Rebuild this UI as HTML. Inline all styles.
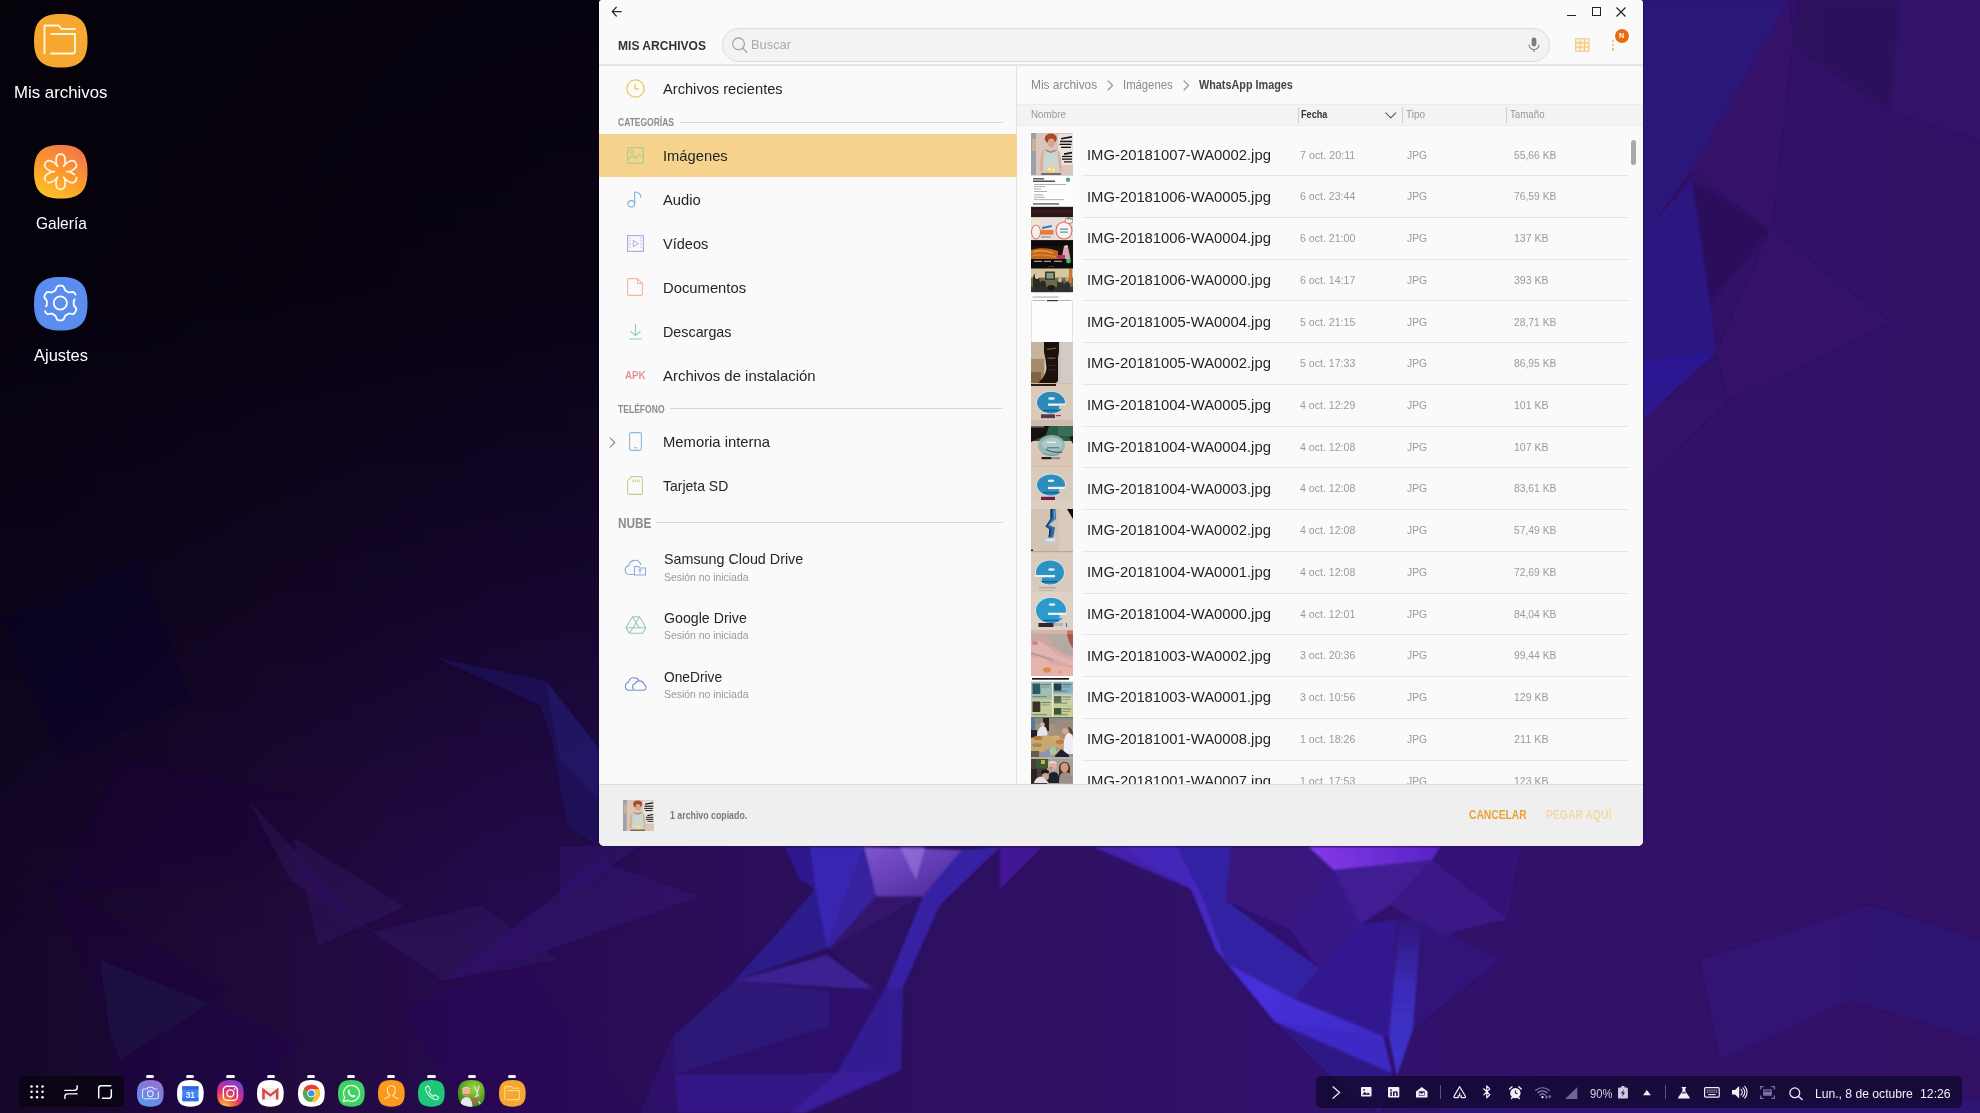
<!DOCTYPE html>
<html><head><meta charset="utf-8"><title>Samsung DeX - Mis archivos</title>
<style>
html,body{margin:0;padding:0}
body{width:1980px;height:1113px;overflow:hidden;position:relative;background:#1a0a3c;font-family:"Liberation Sans",sans-serif}
.t{position:absolute;white-space:nowrap;line-height:1;transform-origin:0 50%}
.abs{position:absolute}
svg{position:absolute;overflow:visible}
</style></head>
<body>
<svg class="abs" style="left:0;top:0" width="1980" height="1113" viewBox="0 0 1980 1113">
<defs>
<linearGradient id="wg1" x1="0" y1="0" x2="1" y2="0">
 <stop offset="0" stop-color="#150729"/><stop offset="0.15" stop-color="#210a3d"/>
 <stop offset="0.25" stop-color="#260b50"/><stop offset="0.35" stop-color="#2a0e58"/>
 <stop offset="0.5" stop-color="#2e1062"/><stop offset="0.66" stop-color="#30116c"/><stop offset="0.83" stop-color="#321168"/><stop offset="1" stop-color="#311066"/>
</linearGradient>
<linearGradient id="wg2" x1="0" y1="0" x2="0" y2="1">
 <stop offset="0" stop-color="#020105" stop-opacity="0.86"/><stop offset="0.27" stop-color="#020105" stop-opacity="0.8"/>
 <stop offset="0.54" stop-color="#03020a" stop-opacity="0.5"/>
 <stop offset="0.72" stop-color="#03020a" stop-opacity="0.2"/><stop offset="0.84" stop-color="#03020a" stop-opacity="0"/>
</linearGradient>
<linearGradient id="wg2m" x1="0" y1="0" x2="1" y2="0">
 <stop offset="0" stop-color="#fff"/><stop offset="0.94" stop-color="#fff"/><stop offset="1" stop-color="#fff" stop-opacity="0"/>
</linearGradient>
<mask id="wm"><rect width="640" height="1113" fill="url(#wg2m)"/></mask>
<linearGradient id="hl1" x1="0" y1="0" x2="1" y2="1"><stop offset="0" stop-color="#8a5ce0"/><stop offset="1" stop-color="#4a2a9c"/></linearGradient>
<linearGradient id="hl2" x1="0" y1="0" x2="1" y2="0"><stop offset="0" stop-color="#8b3cf2"/><stop offset="1" stop-color="#5a26c8"/></linearGradient>
<linearGradient id="rb" x1="0" y1="0" x2="1" y2="1"><stop offset="0" stop-color="#4426b8"/><stop offset="0.5" stop-color="#4a32e0"/><stop offset="1" stop-color="#3a2cc8"/></linearGradient>
<filter id="soft" x="-2%" y="-2%" width="104%" height="104%"><feGaussianBlur stdDeviation="1.100"/></filter>
<linearGradient id="vs" x1="0" y1="0" x2="0" y2="1"><stop offset="0" stop-color="#3c34d0" stop-opacity="0.150"/><stop offset="0.450" stop-color="#3e36d4" stop-opacity="0.850"/><stop offset="1" stop-color="#4038d8" stop-opacity="1"/></linearGradient>
</defs>
<rect width="1980" height="1113" fill="url(#wg1)"/>
<rect width="640" height="1113" fill="url(#wg2)" mask="url(#wm)"/>
<g filter="url(#soft)">
<polygon points="1643,0 1789,0 1692,169 1645,234 1643,234" fill="#2b157c" opacity="0.85"/>
<polygon points="1800,0 1900,0 1890,111 1792,43" fill="#2b0e58" opacity="0.7"/>
<polygon points="1692,169 1789,0 1792,43 1771,230" fill="#35146c" opacity="0.6"/>
<polygon points="1692,180 1771,230 1710,302" fill="#290e5a" opacity="0.85"/>
<polygon points="1643,234 1692,180 1710,302 1717,352 1643,395" fill="#2a1684" opacity="0.85"/>
<polygon points="1717,352 1771,230 1890,323 1728,400" fill="#37166c" opacity="0.6"/>
<polygon points="1643,360 1717,352 1663,400 1643,420" fill="#2c1a98" opacity="0.8"/>
<polygon points="1643,420 1663,400 1728,400 1643,480" fill="#381870" opacity="0.5"/>
<polygon points="1900,0 1980,0 1980,140 1890,111" fill="#33136c" opacity="0.5"/>
<polygon points="434,657 546,681 599,748 599,846 567,826 552,740 540,705" fill="#221868" opacity="0.55"/>
<polygon points="546,681 599,748 599,800 560,760" fill="#2a1e88" opacity="0.3"/>
<polygon points="247,798 371,932 290,880" fill="#34146a" opacity="0.4"/>
<polygon points="293,837 406,907 318,946" fill="#34146a" opacity="0.35"/>
<polygon points="371,932 480,905 560,960 442,981" fill="#331268" opacity="0.35"/>
<polygon points="442,981 601,861 700,897 520,960" fill="#36147c" opacity="0.4"/>
<polygon points="560,846 640,846 560,900" fill="#34137c" opacity="0.4"/>
<polygon points="120,760 330,800 250,880 60,890" fill="#1a0a3a" opacity="0.35"/>
<polygon points="50,880 230,990 120,1060" fill="#1d0d44" opacity="0.35"/>
<polygon points="100,960 300,1040 250,1113 120,1113" fill="#241052" opacity="0.3"/>
<polygon points="400,1010 520,960 640,1113 470,1113" fill="#2f1166" opacity="0.3"/>
<polygon points="0,620 140,560 190,700 60,760" fill="#10082c" opacity="0.25"/>
<polygon points="810,847 864,847 827,948 815,889" fill="#3a28b6" opacity="0.95"/>
<polygon points="785,847 810,847 815,889 800,880" fill="#2f1c9c" opacity="0.8"/>
<polygon points="864,847 962,850 923,896 876,896" fill="url(#hl1)" opacity="0.9"/>
<polygon points="900,847 925,847 916,880" fill="#a184e8" opacity="0.55"/>
<polygon points="876,896 923,896 830,948" fill="#33166e" opacity="0.9"/>
<polygon points="864,847 876,896 830,948 827,948" fill="#3b24a8" opacity="0.85"/>
<polygon points="815,889 827,948 734,981 773,938" fill="#2f1c90" opacity="0.9"/>
<polygon points="734,981 827,955 876,990 830,987" fill="#3d2199" opacity="0.9"/>
<polygon points="827,948 876,990 886,987 905,930 923,896 830,948" fill="#2c1162" opacity="0.6"/>
<polygon points="962,850 1000,847 940,905 903,987 886,987 923,896" fill="#3622ac" opacity="0.9"/>
<polygon points="886,987 903,987 901,1070 837,1073" fill="#3424a4" opacity="0.75"/>
<polygon points="734,981 830,990 830,1026 675,1075 673,1036" fill="#2e167c" opacity="0.85"/>
<polygon points="830,990 886,987 837,1073 675,1075 830,1026" fill="#2b1470" opacity="0.75"/>
<polygon points="675,1075 837,1073 790,1113 678,1113" fill="#351a8e" opacity="0.85"/>
<polygon points="837,1073 901,1070 805,1113 790,1113" fill="#3c22a6" opacity="0.85"/>
<polygon points="673,1036 675,1075 678,1113 640,1113" fill="#301478" opacity="0.6"/>
<polygon points="1000,847 1042,847 1000,889" fill="#46199c" opacity="0.9"/>
<polygon points="1093,847 1177,847 1204,901 1191,889" fill="#4524b4" opacity="0.9"/>
<polygon points="1120,847 1177,847 1191,889" fill="#4a2cc4" opacity="0.6"/>
<polygon points="1177,847 1204,901 1226,963 1294,999 1383,1036 1392,1073 1275,1022 1216,950 1191,889" fill="url(#rb)" opacity="0.95"/>
<polygon points="1177,847 1231,847 1226,901 1319,968 1294,999 1226,963 1204,901" fill="#3526aa" opacity="0.9"/>
<polygon points="1231,847 1309,847 1334,869 1290,930 1226,901" fill="#3a1682" opacity="0.85"/>
<polygon points="1226,901 1290,930 1319,968" fill="#2f1270" opacity="0.8"/>
<polygon points="1309,847 1440,847 1432,860 1334,870" fill="url(#hl2)" opacity="0.95"/>
<polygon points="1334,870 1432,860 1390,905 1360,925" fill="#43209a" opacity="0.85"/>
<polygon points="1290,930 1334,870 1360,925 1319,968" fill="#3c1a8e" opacity="0.8"/>
<polygon points="1432,860 1507,919 1440,935 1390,905" fill="#3f1c92" opacity="0.7"/>
<polygon points="1440,847 1520,847 1507,919 1432,860" fill="#371880" opacity="0.6"/>
<polygon points="1319,968 1360,925 1397,919 1389,1037 1383,1036 1294,999" fill="#341c9a" opacity="0.8"/>
<polygon points="1399,919 1421,919 1413,1029 1397,1076 1389,1037" fill="url(#vs)" opacity="0.9"/>
<polygon points="1421,919 1500,960 1413,1029" fill="#33188a" opacity="0.5"/>
<polygon points="1392,1073 1275,1022 1383,1036" fill="#3d2cc4" opacity="0.8"/>
<polygon points="1275,1022 1392,1073 1380,1113 1330,1075" fill="#32209c" opacity="0.55"/>
<polygon points="1700,960 1870,905 1850,1000 1720,1060" fill="#33178a" opacity="0.35"/>
<polygon points="1870,905 1980,940 1980,1040 1850,1000" fill="#2a1684" opacity="0.35"/>
<polygon points="1440,1100 1980,1100 1980,1113 1440,1113" fill="#2a1494" opacity="0.35"/>
</g>
</svg>
<svg style="left:34.3px;top:14.3px" width="53.5" height="53.5" viewBox="0 0 53.5 53.5"><path d="M26.75 0C46 0 53.5 7.5 53.5 26.75S46 53.5 26.75 53.5 0 46 0 26.75 7.5 0 26.75 0Z" fill="#f5a730"/><path d="M10.5 39.5V11.5h14l3 3.5h13.5M17.5 20h23.5v17a2.5 2.5 0 0 1-2.5 2.5H17" fill="none" stroke="#fff4d8" stroke-width="1.9" stroke-linecap="round" stroke-linejoin="round"/></svg><svg style="left:34.3px;top:145px" width="53.5" height="53.5" viewBox="0 0 53.5 53.5"><defs><linearGradient id="gal" x1="0.8" y1="0" x2="0.3" y2="1"><stop offset="0" stop-color="#f5734f"/><stop offset="0.55" stop-color="#fb9a2c"/><stop offset="1" stop-color="#fdc228"/></linearGradient></defs><path d="M26.75 0C46 0 53.5 7.5 53.5 26.75S46 53.5 26.75 53.5 0 46 0 26.75 7.5 0 26.75 0Z" fill="url(#gal)"/><path d="M23.50 21.33C21.57 18.64 20.48 8.92 26.60 9.10C32.72 8.92 31.63 18.64 29.70 21.33C31.06 18.31 38.93 12.51 41.84 17.90C45.05 23.11 36.09 27.03 32.80 26.70C36.09 26.37 45.05 30.29 41.84 35.50C38.93 40.89 31.06 35.09 29.70 32.07C31.63 34.76 32.72 44.48 26.60 44.30C20.48 44.48 21.57 34.76 23.50 32.07C22.14 35.09 14.27 40.89 11.36 35.50C8.15 30.29 17.11 26.37 20.40 26.70C17.11 27.03 8.15 23.11 11.36 17.90C14.27 12.51 22.14 18.31 23.50 21.33" fill="none" stroke="#fff6dc" stroke-width="1.700" stroke-linecap="round" stroke-linejoin="round" stroke-dasharray="68 3.500 60 3 200"/></svg><svg style="left:34.3px;top:277px" width="53.5" height="53.5" viewBox="0 0 53.5 53.5"><path d="M26.75 0C46 0 53.5 7.5 53.5 26.75S46 53.5 26.75 53.5 0 46 0 26.75 7.5 0 26.75 0Z" fill="#5b8def"/><g fill="none" stroke="#fff" stroke-width="1.800" stroke-linecap="round" stroke-linejoin="round"><circle cx="26.300" cy="26" r="6.600"/><path d="M39.7 26.0L39.7 26.7L39.7 27.4L39.8 28.1L40.2 29.0L41.2 30.0L42.0 31.1L42.3 32.1L42.1 33.1L41.8 33.9L41.4 34.7L40.9 35.5L40.3 36.2L39.6 36.8L38.6 37.1L37.2 36.9L35.8 36.6L34.9 36.6L34.2 36.9L33.6 37.2L33.0 37.6L32.4 37.9L31.8 38.3L31.2 38.8L30.7 39.5L30.3 40.9L29.7 42.2L29.0 42.9L28.1 43.2L27.2 43.4L26.3 43.4L25.4 43.4L24.5 43.2L23.6 42.9L22.9 42.2L22.3 40.9L21.9 39.5L21.4 38.8L20.8 38.3L20.2 37.9L19.6 37.6L19.0 37.2L18.4 36.9L17.7 36.6L16.8 36.6L15.4 36.9L14.0 37.1L13.0 36.8L12.3 36.2L11.7 35.5L11.2 34.7L10.8 33.9L10.5 33.1L10.3 32.1L10.6 31.1L11.4 30.0L12.4 29.0L12.8 28.1L12.9 27.4L12.9 26.7L12.9 26.0L12.9 25.3L12.9 24.6L12.8 23.9L12.4 23.0L11.4 22.0L10.6 20.9L10.3 19.9L10.5 18.9L10.8 18.1L11.2 17.3L11.7 16.5L12.3 15.8L13.0 15.2L14.0 14.9L15.4 15.1L16.8 15.4L17.7 15.4L18.4 15.1L19.0 14.8L19.6 14.4L20.2 14.1L20.8 13.7L21.4 13.2L21.9 12.5L22.3 11.1L22.9 9.8L23.6 9.1L24.5 8.8L25.4 8.6L26.3 8.6L27.2 8.6L28.1 8.8L29.0 9.1L29.7 9.8L30.3 11.1L30.7 12.5L31.2 13.2L31.8 13.7L32.4 14.1L33.0 14.4L33.6 14.8L34.2 15.1L34.9 15.4L35.8 15.4L37.2 15.1L38.6 14.9L39.6 15.2L40.3 15.8L40.9 16.5L41.4 17.3L41.8 18.1L42.1 18.9L42.3 19.9L42.0 20.9L41.2 22.0L40.2 23.0L39.8 23.9L39.7 24.6L39.7 25.3L39.7 26.0" stroke-dasharray="49 5.500 52.500 5.500 3.9 0"/></g></svg><span class="t" style="left:14.3px;top:84.0px;font-size:17px;font-weight:400;color:#fff;transform:scaleX(0.9887);">Mis archivos</span><span class="t" style="left:35.6px;top:215.0px;font-size:17px;font-weight:400;color:#fff;transform:scaleX(0.9112);">Galería</span><span class="t" style="left:34.2px;top:347.0px;font-size:17px;font-weight:400;color:#fff;transform:scaleX(0.9686);">Ajustes</span><div class="abs" style="left:599px;top:0;width:1044px;height:846px;background:#fafafa;border-radius:2.500px 2.500px 5px 5px;box-shadow:0 0 2px rgba(0,0,0,.45)"></div><div class="abs" style="left:599px;top:64px;width:1044px;height:2px;background:#e4e4e4"></div><div class="abs" style="left:1016px;top:66px;width:1px;height:718px;background:#e2e2e2"></div><div class="abs" style="left:599px;top:784px;width:1044px;height:62px;background:#efefef;border-top:1px solid #dcdcdc;box-sizing:border-box;border-radius:0 0 5px 5px"></div><svg style="left:611px;top:6px" width="12" height="12" viewBox="0 0 12 12"><path d="M10.200 5.600H1.400M5.300 1.200L1.200 5.600l4.100 4.400" fill="none" stroke="#2b2b2b" stroke-width="1.250" stroke-linecap="round" stroke-linejoin="round"/></svg><div class="abs" style="left:1567px;top:14.5px;width:9px;height:1.4px;background:#222"></div><div class="abs" style="left:1592px;top:7px;width:9px;height:9px;box-sizing:border-box;border:1.2px solid #222"></div><svg style="left:1616px;top:6.500px" width="10" height="10" viewBox="0 0 10 10"><path d="M0.500 0.500l9 9M9.500 0.500l-9 9" stroke="#222" stroke-width="1.2"/></svg><span class="t" style="left:618.4px;top:39.0px;font-size:13.5px;font-weight:700;color:#333;transform:scaleX(0.8933);">MIS ARCHIVOS</span><div class="abs" style="left:721.5px;top:28px;width:828.500px;height:34px;box-sizing:border-box;border:1px solid #dcdcdc;border-radius:17px;background:#f3f3f3"></div><svg style="left:731px;top:36px" width="18" height="18" viewBox="0 0 18 18"><circle cx="7.500" cy="7.800" r="5.900" fill="none" stroke="#9a9a9a" stroke-width="1.1"/><path d="M11.800 12.200l4 4.200" stroke="#9a9a9a" stroke-width="1.2" stroke-linecap="round"/></svg><span class="t" style="left:751.3px;top:38.0px;font-size:13px;font-weight:400;color:#aaaaaa;transform:scaleX(0.9884);">Buscar</span><svg style="left:1527px;top:36px" width="14" height="18" viewBox="0 0 14 18"><rect x="4.600" y="1.500" width="4.800" height="9" rx="2.400" fill="#7d7d7d"/><path d="M2 8.500a5 5 0 0 0 10 0M7 13.500v2.500" fill="none" stroke="#7d7d7d" stroke-width="1.1"/></svg><svg style="left:1575px;top:38px" width="15" height="14" viewBox="0 0 15 14"><path d="M0.700 0.700h13.300v12.600H0.700zM5.100 0.700v12.600M9.600 0.700v12.600M0.700 4.900h13.300M0.700 9.100h13.300" fill="#fbf1dc" stroke="#eec987" stroke-width="1.1"/></svg><div class="abs" style="left:1611.5px;top:39.500px;width:2.600px;height:2.600px;border-radius:2px;background:#eab765"></div><div class="abs" style="left:1611.5px;top:43.800px;width:2.600px;height:2.600px;border-radius:2px;background:#eab765"></div><div class="abs" style="left:1611.5px;top:48.100px;width:2.600px;height:2.600px;border-radius:2px;background:#eab765"></div><div class="abs" style="left:1615px;top:28.800px;width:14px;height:14px;border-radius:7px;background:#ea6a12"></div><span class="t" style="left:1619.4px;top:32.0px;font-size:7.5px;font-weight:700;color:#fff;transform:scaleX(0.9591);">N</span><svg style="left:625.5px;top:79px" width="19" height="19" viewBox="0 0 19 19"><circle cx="9.500" cy="9.500" r="8.600" fill="none" stroke="#e9c84f" stroke-width="1.2"/><path d="M9 4.800v5h4" fill="none" stroke="#e9c84f" stroke-width="1.2"/></svg><span class="t" style="left:663.4px;top:81.0px;font-size:15px;font-weight:400;color:#252525;transform:scaleX(0.9766);">Archivos recientes</span><span class="t" style="left:618.4px;top:118.0px;font-size:10px;font-weight:700;color:#8c8c8c;transform:scaleX(0.8493);">CATEGORÍAS</span><div class="abs" style="left:679.5px;top:121.500px;width:323.500px;height:1.200px;background:#d9d9d9"></div><div class="abs" style="left:599px;top:133.500px;width:418px;height:43px;background:#f5d38c"></div><span class="t" style="left:663.2px;top:148.0px;font-size:15px;font-weight:400;color:#252525;transform:scaleX(0.9822);">Imágenes</span><span class="t" style="left:663.2px;top:192.0px;font-size:15px;font-weight:400;color:#252525;transform:scaleX(0.9850);">Audio</span><span class="t" style="left:663.2px;top:236.0px;font-size:15px;font-weight:400;color:#252525;transform:scaleX(0.9700);">Vídeos</span><span class="t" style="left:663.2px;top:280.0px;font-size:15px;font-weight:400;color:#252525;transform:scaleX(0.9867);">Documentos</span><span class="t" style="left:663.2px;top:324.0px;font-size:15px;font-weight:400;color:#252525;transform:scaleX(0.9553);">Descargas</span><span class="t" style="left:663.2px;top:368.0px;font-size:15px;font-weight:400;color:#252525;transform:scaleX(0.9946);">Archivos de instalación</span><span class="t" style="left:663.2px;top:434.0px;font-size:15px;font-weight:400;color:#252525;transform:scaleX(0.9872);">Memoria interna</span><span class="t" style="left:663.2px;top:478.0px;font-size:15px;font-weight:400;color:#252525;transform:scaleX(0.9324);">Tarjeta SD</span><svg style="left:627px;top:146.500px" width="17" height="17" viewBox="0 0 17 17"><rect x="0.600" y="0.600" width="15.800" height="15.800" rx="1" fill="none" stroke="#a9cf8d" stroke-width="1.100"/><circle cx="4.600" cy="4.800" r="1.500" fill="none" stroke="#a9cf8d" stroke-width="1"/><path d="M0.800 12.500l4.400-4 3.600 3 3.400-4.300 4.200 3.500" fill="none" stroke="#a9cf8d" stroke-width="1.100"/></svg><svg style="left:627px;top:190.500px" width="16" height="17" viewBox="0 0 16 17"><ellipse cx="4.300" cy="12.800" rx="3.400" ry="3.200" fill="none" stroke="#7fb1d6" stroke-width="1.100"/><path d="M7.700 12.800V1c3.500 0 6 2 6.300 5.500" fill="none" stroke="#7fb1d6" stroke-width="1.100" stroke-linecap="round"/></svg><svg style="left:626.5px;top:234.500px" width="17" height="17" viewBox="0 0 17 17"><rect x="0.600" y="0.600" width="15.800" height="15.800" fill="none" stroke="#b3a3e3" stroke-width="1.100"/><path d="M3 2.500v12M14 2.500v12" stroke="#b3a3e3" stroke-width="1" stroke-dasharray="1.300 1.700"/><path d="M6.300 5.300v6.400l5.200-3.200z" fill="none" stroke="#b3a3e3" stroke-width="1" stroke-linejoin="round"/></svg><svg style="left:627px;top:278px" width="16" height="18" viewBox="0 0 16 18"><path d="M0.600 2.100a1.500 1.500 0 0 1 1.500-1.500h8.400l4.900 4.900v10.400a1.500 1.500 0 0 1-1.500 1.500H2.100a1.500 1.500 0 0 1-1.500-1.500zM10.500 0.600v4.900h4.900" fill="none" stroke="#f1b999" stroke-width="1.100" stroke-linejoin="round"/></svg><svg style="left:628.5px;top:323.500px" width="13" height="16" viewBox="0 0 13 16"><path d="M6.500 0.500v11M1.800 7.300l4.700 4.400 4.700-4.400M0.500 15h12" fill="none" stroke="#93c9c6" stroke-width="1.100" stroke-linecap="round" stroke-linejoin="round"/></svg><span class="t" style="left:624.8px;top:370.0px;font-size:11px;font-weight:700;color:#ea9292;transform:scaleX(0.8909);">APK</span><span class="t" style="left:618.1px;top:405.0px;font-size:10px;font-weight:700;color:#8c8c8c;transform:scaleX(0.8558);">TELÉFONO</span><div class="abs" style="left:669.5px;top:408.300px;width:333.500px;height:1.200px;background:#d9d9d9"></div><svg style="left:608.5px;top:436.500px" width="7" height="11" viewBox="0 0 7 11"><path d="M1 0.800l4.800 4.700L1 10.200" fill="none" stroke="#8a8a8a" stroke-width="1.100" stroke-linecap="round" stroke-linejoin="round"/></svg><svg style="left:628.5px;top:432px" width="13" height="19" viewBox="0 0 13 19"><rect x="0.600" y="0.600" width="11.800" height="17.800" rx="1.600" fill="none" stroke="#8cb9e2" stroke-width="1.100"/><path d="M5 15.800h3" stroke="#8cb9e2" stroke-width="1"/></svg><svg style="left:626.5px;top:476px" width="16" height="19" viewBox="0 0 16 19"><path d="M4.500 0.600h9.400a1.500 1.500 0 0 1 1.500 1.500v14.800a1.500 1.500 0 0 1-1.500 1.500H2.100a1.500 1.500 0 0 1-1.500-1.500V5z" fill="none" stroke="#bcd489" stroke-width="1.100" stroke-linejoin="round"/><path d="M6 3.500v2.800M8.200 3.500v2.800M10.400 3.500v2.800M12.600 3.500v2.800" stroke="#bcd489" stroke-width="1"/></svg><span class="t" style="left:618.1px;top:516.0px;font-size:14.5px;font-weight:700;color:#8c8c8c;transform:scaleX(0.8128);">NUBE</span><div class="abs" style="left:655.5px;top:521.600px;width:347.500px;height:1.200px;background:#d9d9d9"></div><span class="t" style="left:663.5px;top:551.0px;font-size:15px;font-weight:400;color:#252525;transform:scaleX(0.9540);">Samsung Cloud Drive</span><span class="t" style="left:663.5px;top:572.0px;font-size:10.5px;font-weight:400;color:#999;transform:scaleX(0.9914);">Sesión no iniciada</span><span class="t" style="left:663.5px;top:610.0px;font-size:15px;font-weight:400;color:#252525;transform:scaleX(0.9458);">Google Drive</span><span class="t" style="left:663.5px;top:630.0px;font-size:10.5px;font-weight:400;color:#999;transform:scaleX(0.9914);">Sesión no iniciada</span><span class="t" style="left:663.5px;top:669.0px;font-size:15px;font-weight:400;color:#252525;transform:scaleX(0.9170);">OneDrive</span><span class="t" style="left:663.5px;top:689.0px;font-size:10.5px;font-weight:400;color:#999;transform:scaleX(0.9914);">Sesión no iniciada</span><svg style="left:623.5px;top:556.500px" width="23" height="19" viewBox="0 0 23 19"><path d="M9.500 17.500H5.200A4.500 4.500 0 0 1 4.800 8.600 6.200 6.200 0 0 1 16.800 7.500" fill="none" stroke="#8ea9d8" stroke-width="1.100" stroke-linecap="round"/><path d="M10.500 9.500h4l1.200 1.500h5.800v7H10.500z" fill="none" stroke="#8ea9d8" stroke-width="1.100" stroke-linejoin="round"/><path d="M16 16.500v-4M14.300 13.800l1.700-1.600 1.700 1.600" fill="none" stroke="#8ea9d8" stroke-width="1"/></svg><svg style="left:624.5px;top:615.500px" width="22" height="18" viewBox="0 0 22 18"><path d="M7.500 0.800h7l6.500 11-3.400 5.400H4.200L0.900 11.800zM7.500 0.800l6.800 11H21M14.500 0.800L8 11.800l-3.800 5.400M0.900 11.800h13.400" fill="none" stroke="#93c9b3" stroke-width="1.050" stroke-linejoin="round"/></svg><svg style="left:623.5px;top:675px" width="24" height="16" viewBox="0 0 24 16"><path d="M9 15.200H5A4 4 0 0 1 4.600 7.300 5.600 5.600 0 0 1 15 5.600" fill="none" stroke="#7393cb" stroke-width="1.100" stroke-linecap="round"/><path d="M11.500 15.200a3.400 3.400 0 0 1-0.200-6.700 4.700 4.700 0 0 1 8.800 1 3 3 0 0 1-0.300 5.700z" fill="none" stroke="#7393cb" stroke-width="1.100" stroke-linejoin="round"/></svg><span class="t" style="left:1030.9px;top:79.0px;font-size:12px;font-weight:400;color:#8a8a8a;transform:scaleX(0.9927);">Mis archivos</span><span class="t" style="left:1123.2px;top:79.0px;font-size:12px;font-weight:400;color:#8a8a8a;transform:scaleX(0.9411);">Imágenes</span><span class="t" style="left:1198.9px;top:79.0px;font-size:12px;font-weight:700;color:#454545;transform:scaleX(0.9027);">WhatsApp Images</span><svg style="left:1107px;top:80px" width="7" height="11" viewBox="0 0 7 11"><path d="M1 0.800l4.600 4.600L1 10" fill="none" stroke="#8a8a8a" stroke-width="1.100" stroke-linecap="round" stroke-linejoin="round"/></svg><svg style="left:1183px;top:80px" width="7" height="11" viewBox="0 0 7 11"><path d="M1 0.800l4.600 4.600L1 10" fill="none" stroke="#8a8a8a" stroke-width="1.100" stroke-linecap="round" stroke-linejoin="round"/></svg><div class="abs" style="left:1017px;top:103.500px;width:626px;height:22.500px;background:#f3f3f3;border-top:1px solid #ececec;border-bottom:1px solid #ececec;box-sizing:border-box"></div><div class="abs" style="left:1297.5px;top:106.500px;width:1px;height:16px;background:#cfcfcf"></div><div class="abs" style="left:1401.5px;top:106.500px;width:1px;height:16px;background:#cfcfcf"></div><div class="abs" style="left:1506.2px;top:106.500px;width:1px;height:16px;background:#cfcfcf"></div><span class="t" style="left:1030.9px;top:109.0px;font-size:10.5px;font-weight:400;color:#999;transform:scaleX(0.9368);">Nombre</span><span class="t" style="left:1301.2px;top:109.0px;font-size:10.5px;font-weight:700;color:#333;transform:scaleX(0.8696);">Fecha</span><span class="t" style="left:1405.7px;top:109.0px;font-size:10.5px;font-weight:400;color:#999;transform:scaleX(0.9478);">Tipo</span><span class="t" style="left:1510.4px;top:109.0px;font-size:10.5px;font-weight:400;color:#999;transform:scaleX(0.9261);">Tamaño</span><svg style="left:1385px;top:111.500px" width="12" height="7" viewBox="0 0 12 7"><path d="M0.800 0.800l5 5 5-5" fill="none" stroke="#555" stroke-width="1.100" stroke-linecap="round" stroke-linejoin="round"/></svg><div class="abs" style="left:1017px;top:126px;width:626px;height:658px;overflow:hidden"><div class="abs" style="left:14px;top:7.40px;width:42px;height:42.03px;overflow:hidden;background:#d8c4b6"><svg style="left:0;top:0" width="42" height="42" viewBox="0 0 42 42" preserveAspectRatio="none"><rect width="42" height="42" fill="#d9c5b9"/><rect width="5" height="42" fill="#9aa0ac"/><rect x="1" y="6" width="4" height="12" fill="#c9b08e"/><rect x="27" y="1" width="15" height="31" fill="#e9e2de"/><ellipse cx="19.800" cy="5.600" rx="6" ry="5" fill="#a8492a"/><ellipse cx="20.300" cy="9.800" rx="3.500" ry="4.400" fill="#d9a48c"/><path d="M8.500 38c0-9 1.500-19 4.500-21h13.500c3.500 2 4 12 4 21z" fill="#dcae98"/><path d="M13 17.500c3 2.500 10 2.500 13.500 0l2 20.500H12z" fill="#cad6d2"/><path d="M15 16.500c2.500 3.500 7.500 3.500 10 0" fill="none" stroke="#6a6a72" stroke-width="0.900"/><ellipse cx="20.500" cy="36.500" rx="5" ry="3.600" fill="#e6d68c"/><circle cx="18.500" cy="36" r="1.300" fill="#f4ecd0"/><circle cx="22.500" cy="37" r="1.300" fill="#f4ecd0"/><rect x="10" y="40" width="20" height="2" fill="#7a6a62"/><g fill="#141414"><rect x="30" y="4" width="11" height="1.700" transform="rotate(-10 35 5)"/><rect x="29" y="7.700" width="12" height="1.500"/><rect x="28.500" y="10.700" width="12" height="1.300"/><rect x="30" y="13.700" width="10" height="1.300"/><rect x="33" y="19.500" width="8" height="1.700" transform="rotate(-10 37 20)"/><rect x="31" y="22.800" width="10" height="1.300"/><rect x="31" y="25.500" width="10" height="1.300"/><rect x="33" y="28.300" width="8" height="1.200"/></g></svg></div><span class="t" style="left:69.6px;top:21.0px;font-size:15px;font-weight:400;color:#252525;transform:scaleX(0.9875);">IMG-20181007-WA0002.jpg</span><span class="t" style="left:283.3px;top:24.0px;font-size:11px;font-weight:400;color:#9a9a9a;transform:scaleX(0.9758);">7 oct. 20:11</span><span class="t" style="left:390.2px;top:24.0px;font-size:11px;font-weight:400;color:#9a9a9a;transform:scaleX(0.9343);">JPG</span><span class="t" style="left:496.7px;top:24.0px;font-size:11px;font-weight:400;color:#9a9a9a;transform:scaleX(0.9367);">55,66 KB</span><div class="abs" style="left:65px;top:49.30px;width:547px;height:1px;background:#e6e6e6"></div><div class="abs" style="left:14px;top:49.13px;width:42px;height:42.03px;overflow:hidden;background:#d8c4b6"><svg style="left:0;top:0" width="42" height="42" viewBox="0 0 42 42" preserveAspectRatio="none"><rect width="42" height="42" fill="#fdfdfd"/><rect width="42" height="0.800" fill="#cfcfcf"/><circle cx="37" cy="4.700" r="2.200" fill="#3bb27a"/><rect x="2" y="3.300" width="11" height="1.100" fill="#222"/><rect x="2" y="5.600" width="22" height="1.200" fill="#222"/><g fill="#9a9a9a"><rect x="3" y="9" width="32" height="0.800"/><rect x="3" y="11.300" width="11" height="0.800"/><rect x="3" y="13.600" width="7" height="0.800"/><rect x="3" y="16" width="13" height="0.800"/><rect x="3" y="19.500" width="9" height="0.800"/><rect x="3" y="21.800" width="11" height="0.800"/><rect x="3" y="24.300" width="30" height="0.800"/></g><rect x="2" y="28.300" width="26" height="1.300" fill="#555"/><rect y="31.800" width="42" height="10.200" fill="#2a161a"/><rect y="35" width="42" height="3" fill="#3a1a1a"/></svg></div><span class="t" style="left:69.6px;top:63.0px;font-size:15px;font-weight:400;color:#252525;transform:scaleX(0.9875);">IMG-20181006-WA0005.jpg</span><span class="t" style="left:283.3px;top:65.0px;font-size:11px;font-weight:400;color:#9a9a9a;transform:scaleX(0.9617);">6 oct. 23:44</span><span class="t" style="left:390.2px;top:65.0px;font-size:11px;font-weight:400;color:#9a9a9a;transform:scaleX(0.9343);">JPG</span><span class="t" style="left:496.7px;top:65.0px;font-size:11px;font-weight:400;color:#9a9a9a;transform:scaleX(0.9367);">76,59 KB</span><div class="abs" style="left:65px;top:91.03px;width:547px;height:1px;background:#e6e6e6"></div><div class="abs" style="left:14px;top:90.86px;width:42px;height:42.03px;overflow:hidden;background:#d8c4b6"><svg style="left:0;top:0" width="42" height="42" viewBox="0 0 42 42" preserveAspectRatio="none"><rect width="42" height="42" fill="#e9dfda"/><rect width="42" height="1" fill="#d0c4c0"/><ellipse cx="5" cy="15" rx="4.500" ry="7" fill="#f4efec" stroke="#d8685e" stroke-width="1"/><ellipse cx="33" cy="13.500" rx="8" ry="8.500" fill="#f6f2f0" stroke="#d8685e" stroke-width="1.100"/><ellipse cx="38" cy="3.500" rx="4" ry="3" fill="#f4efec" stroke="#d8685e" stroke-width="0.900"/><rect x="36" y="1" width="6" height="1.500" fill="#3fb8a0"/><rect x="9.500" y="13" width="13" height="4.600" fill="#ea7a3a"/><rect x="11" y="9" width="10" height="2" fill="#3a78b8" transform="rotate(-12 16 10)"/><rect x="29" y="11.500" width="8" height="1.200" fill="#4a9aa8"/><rect x="29" y="14.500" width="8" height="1.200" fill="#4a9aa8"/><rect x="10" y="19.500" width="10" height="1" fill="#7a7a8a"/><ellipse cx="5" cy="5" rx="4" ry="3" fill="#f0e6c8"/><rect y="23.300" width="42" height="18.700" fill="#17100e"/><rect y="23.300" width="42" height="6" fill="#0e0a0a"/><path d="M0 33c8-3 20-2 27 1v8H0z" fill="#c4681e"/><path d="M2 35c6-2 14-1 20 1" stroke="#e89a3a" stroke-width="1.500" fill="none"/><path d="M1 39c7-2 16-1 24 1" stroke="#e08830" stroke-width="1.300" fill="none"/><path d="M33 29c2-1 4 0 4.500 3l2 10h-9z" fill="#d9a4b4"/><circle cx="35.500" cy="29.500" r="1.600" fill="#e8c0c0"/><rect x="26" y="38" width="8" height="4" fill="#b03a50"/></svg></div><span class="t" style="left:69.6px;top:104.0px;font-size:15px;font-weight:400;color:#252525;transform:scaleX(0.9875);">IMG-20181006-WA0004.jpg</span><span class="t" style="left:283.3px;top:107.0px;font-size:11px;font-weight:400;color:#9a9a9a;transform:scaleX(0.9617);">6 oct. 21:00</span><span class="t" style="left:390.2px;top:107.0px;font-size:11px;font-weight:400;color:#9a9a9a;transform:scaleX(0.9343);">JPG</span><span class="t" style="left:496.7px;top:107.0px;font-size:11px;font-weight:400;color:#9a9a9a;transform:scaleX(0.9586);">137 KB</span><div class="abs" style="left:65px;top:132.76px;width:547px;height:1px;background:#e6e6e6"></div><div class="abs" style="left:14px;top:132.59px;width:42px;height:42.03px;overflow:hidden;background:#d8c4b6"><svg style="left:0;top:0" width="42" height="42" viewBox="0 0 42 42" preserveAspectRatio="none"><rect width="42" height="42" fill="#0d0b0b"/><g fill="#d8d8d8"><rect x="3" y="1.800" width="8" height="0.900"/><rect x="13" y="1.800" width="7" height="0.900"/><rect x="23" y="1.800" width="8" height="0.900"/></g><circle cx="37.500" cy="2" r="2.400" fill="#2fc465"/><rect x="17" y="7" width="6" height="0.700" fill="#444"/><rect y="9.600" width="42" height="23.600" fill="#6c6a4a"/><rect y="9.600" width="42" height="9" fill="#d6c79e"/><rect x="38" y="10" width="3" height="14" fill="#c87830"/><rect x="14" y="12.500" width="10" height="8.500" fill="#3a3a30"/><rect x="15.500" y="14" width="7" height="5.500" fill="#8a9a88"/><path d="M2 33V18c1-4 5-5 6 0l1 6c2-4 5-3 6 1v8z" fill="#2a2a22"/><path d="M26 33v-9c1-5 5-6 6-1l1 3c1-4 5-4 6 0v7z" fill="#303028"/><ellipse cx="6" cy="17" rx="2.200" ry="3" fill="#d8c8b8"/><ellipse cx="29" cy="21" rx="2" ry="2.500" fill="#c8b8a0"/><ellipse cx="36" cy="20" rx="1.800" ry="2.300" fill="#b8a890"/><rect y="28" width="42" height="5.200" fill="#2c3028" opacity="0.850"/><ellipse cx="20" cy="29" rx="4" ry="3" fill="#1a1c18"/><rect y="33.200" width="42" height="8.800" fill="#fcfcfc"/><rect x="1.500" y="37.600" width="26" height="0.900" fill="#9a9a9a"/></svg></div><span class="t" style="left:69.6px;top:146.0px;font-size:15px;font-weight:400;color:#252525;transform:scaleX(0.9875);">IMG-20181006-WA0000.jpg</span><span class="t" style="left:283.3px;top:149.0px;font-size:11px;font-weight:400;color:#9a9a9a;transform:scaleX(0.9617);">6 oct. 14:17</span><span class="t" style="left:390.2px;top:149.0px;font-size:11px;font-weight:400;color:#9a9a9a;transform:scaleX(0.9343);">JPG</span><span class="t" style="left:496.7px;top:149.0px;font-size:11px;font-weight:400;color:#9a9a9a;transform:scaleX(0.9586);">393 KB</span><div class="abs" style="left:65px;top:174.49px;width:547px;height:1px;background:#e6e6e6"></div><div class="abs" style="left:14px;top:174.32px;width:42px;height:42.03px;overflow:hidden;background:#d8c4b6"><svg style="left:0;top:0" width="42" height="42" viewBox="0 0 42 42" preserveAspectRatio="none"><rect width="42" height="42" fill="#fefefe"/><rect x="0" y="0" width="0.700" height="42" fill="#d9d9d9"/><rect x="41.300" y="0" width="0.700" height="42" fill="#d9d9d9"/><rect y="0.300" width="42" height="0.600" fill="#cfcfcf"/><rect x="2" y="0.200" width="12" height="0.800" fill="#aaa"/><rect x="16" y="0" width="11" height="1.200" fill="#333"/><rect x="28" y="0.200" width="12" height="0.800" fill="#aaa"/></svg></div><span class="t" style="left:69.6px;top:188.0px;font-size:15px;font-weight:400;color:#252525;transform:scaleX(0.9875);">IMG-20181005-WA0004.jpg</span><span class="t" style="left:283.3px;top:191.0px;font-size:11px;font-weight:400;color:#9a9a9a;transform:scaleX(0.9617);">5 oct. 21:15</span><span class="t" style="left:390.2px;top:191.0px;font-size:11px;font-weight:400;color:#9a9a9a;transform:scaleX(0.9343);">JPG</span><span class="t" style="left:496.7px;top:191.0px;font-size:11px;font-weight:400;color:#9a9a9a;transform:scaleX(0.9367);">28,71 KB</span><div class="abs" style="left:65px;top:216.22px;width:547px;height:1px;background:#e6e6e6"></div><div class="abs" style="left:14px;top:216.05px;width:42px;height:42.03px;overflow:hidden;background:#d8c4b6"><svg style="left:0;top:0" width="42" height="42" viewBox="0 0 42 42" preserveAspectRatio="none"><rect width="42" height="42" fill="#cfc4b8"/><rect width="14" height="42" fill="#c6b49c"/><rect x="30" width="12" height="42" fill="#d2cac4"/><path d="M0 17h13v25H0z" fill="#9a7c56" opacity="0.750"/><path d="M0 30h10v12H0z" fill="#6e5438" opacity="0.700"/><path d="M13 0h15v10l-1 6v23l-3 3H6.500c4-4 8.500-9 9-16l-1-9-1.500-7z" fill="#1c120a"/><g fill="#6a5a4a"><rect x="16" y="6.300" width="9" height="1.200" transform="rotate(-8 20 7)"/><rect x="16.500" y="15.500" width="8" height="1.300"/><rect x="17" y="23" width="7" height="0.800" fill="#4a3228"/><rect x="17.500" y="27.500" width="7" height="0.900" fill="#3a3030"/></g><rect y="41" width="42" height="1" fill="#d8b8a8"/></svg></div><span class="t" style="left:69.6px;top:229.0px;font-size:15px;font-weight:400;color:#252525;transform:scaleX(0.9875);">IMG-20181005-WA0002.jpg</span><span class="t" style="left:283.3px;top:232.0px;font-size:11px;font-weight:400;color:#9a9a9a;transform:scaleX(0.9617);">5 oct. 17:33</span><span class="t" style="left:390.2px;top:232.0px;font-size:11px;font-weight:400;color:#9a9a9a;transform:scaleX(0.9343);">JPG</span><span class="t" style="left:496.7px;top:232.0px;font-size:11px;font-weight:400;color:#9a9a9a;transform:scaleX(0.9367);">86,95 KB</span><div class="abs" style="left:65px;top:257.95px;width:547px;height:1px;background:#e6e6e6"></div><div class="abs" style="left:14px;top:257.78px;width:42px;height:42.03px;overflow:hidden;background:#d8c4b6"><svg style="left:0;top:0" width="42" height="42" viewBox="0 0 42 42" preserveAspectRatio="none"><rect width="42" height="42" fill="#d9cabb"/><rect width="25" height="2" fill="#2a1c10"/><rect y="36" width="42" height="6" fill="#cdbdae"/><ellipse cx="20" cy="18.6" rx="14.8" ry="11.600000000000001" fill="#e4ecf0" opacity="0.8"/><ellipse cx="20" cy="18.6" rx="14" ry="10.8" fill="#2b8ab8"/><rect x="17" y="19.5" width="17" height="2.300" fill="#eef2f4"/><ellipse cx="20.5" cy="14.5" rx="3.300" ry="1.300" fill="#e8f0f4"/><path d="M35 21.8h-7.0v3.200h5.6000000000000005z" fill="#d8c8b8"/><rect x="12" y="25.900000000000002" width="15" height="1.300" fill="#1a4a78" opacity="0.800"/><rect x="10" y="30.300" width="14" height="3.800" fill="#5c3454"/><rect x="24" y="30" width="8" height="3.600" fill="#d8c8cc"/><rect x="25" y="31" width="5" height="1.200" fill="#a04058"/></svg></div><span class="t" style="left:69.6px;top:271.0px;font-size:15px;font-weight:400;color:#252525;transform:scaleX(0.9875);">IMG-20181004-WA0005.jpg</span><span class="t" style="left:283.3px;top:274.0px;font-size:11px;font-weight:400;color:#9a9a9a;transform:scaleX(0.9617);">4 oct. 12:29</span><span class="t" style="left:390.2px;top:274.0px;font-size:11px;font-weight:400;color:#9a9a9a;transform:scaleX(0.9343);">JPG</span><span class="t" style="left:496.7px;top:274.0px;font-size:11px;font-weight:400;color:#9a9a9a;transform:scaleX(0.9586);">101 KB</span><div class="abs" style="left:65px;top:299.68px;width:547px;height:1px;background:#e6e6e6"></div><div class="abs" style="left:14px;top:299.51px;width:42px;height:42.03px;overflow:hidden;background:#d8c4b6"><svg style="left:0;top:0" width="42" height="42" viewBox="0 0 42 42" preserveAspectRatio="none"><rect width="42" height="42" fill="#dcc6b6"/><rect width="42" height="15" fill="#2c5a48"/><rect x="27" width="15" height="10" fill="#3a6a58"/><path d="M0 0h18l-3 9L0 16z" fill="#191010"/><rect x="0" y="0.500" width="13" height="0.800" fill="#bbb"/><path d="M38 11l4-1v8z" fill="#1a1a1a"/><ellipse cx="20.500" cy="19.500" rx="13.500" ry="10.500" fill="#8fb8b8" opacity="0.900"/><ellipse cx="21" cy="18" rx="10" ry="6.500" fill="#b4cfcf" opacity="0.750"/><rect x="16" y="15.500" width="9" height="1.600" fill="#e4ecec"/><rect x="16" y="21" width="12" height="1.500" fill="#5a8a90"/><path d="M15 23c4 3 9 4 16 3" stroke="#3a6a78" stroke-width="1.300" fill="none"/><path d="M12 27c4 2 10 3 16 1.500" stroke="#6a9aa0" stroke-width="1.200" fill="none"/><rect x="10.500" y="31" width="10" height="2.200" fill="#1c1c1c"/><rect x="21" y="31.300" width="8" height="1.800" fill="#8a8080"/><rect y="40" width="42" height="2" fill="#d0bcae"/></svg></div><span class="t" style="left:69.6px;top:313.0px;font-size:15px;font-weight:400;color:#252525;transform:scaleX(0.9875);">IMG-20181004-WA0004.jpg</span><span class="t" style="left:283.3px;top:316.0px;font-size:11px;font-weight:400;color:#9a9a9a;transform:scaleX(0.9617);">4 oct. 12:08</span><span class="t" style="left:390.2px;top:316.0px;font-size:11px;font-weight:400;color:#9a9a9a;transform:scaleX(0.9343);">JPG</span><span class="t" style="left:496.7px;top:316.0px;font-size:11px;font-weight:400;color:#9a9a9a;transform:scaleX(0.9586);">107 KB</span><div class="abs" style="left:65px;top:341.41px;width:547px;height:1px;background:#e6e6e6"></div><div class="abs" style="left:14px;top:341.24px;width:42px;height:42.03px;overflow:hidden;background:#d8c4b6"><svg style="left:0;top:0" width="42" height="42" viewBox="0 0 42 42" preserveAspectRatio="none"><rect width="42" height="42" fill="#d9cabb"/><rect y="0" width="42" height="1.500" fill="#e0c8b4"/><rect y="34" width="42" height="8" fill="#dccfc2"/><ellipse cx="20" cy="18" rx="14.8" ry="11.3" fill="#e4ecf0" opacity="0.8"/><ellipse cx="20" cy="18" rx="14" ry="10.5" fill="#2b8ebc"/><rect x="17" y="19.8" width="17" height="2.300" fill="#eef2f4"/><ellipse cx="20" cy="13.8" rx="3.300" ry="1.300" fill="#e8f0f4"/><path d="M35 22.1h-7.0v3.200h5.6000000000000005z" fill="#d8c8b8"/><rect x="12" y="25.0" width="15" height="1.300" fill="#1a4a78" opacity="0.800"/><rect x="10" y="29.800" width="14" height="3.200" fill="#6a2048"/><rect x="24.500" y="29.800" width="8" height="3" fill="#d8ccd0"/></svg></div><span class="t" style="left:69.6px;top:355.0px;font-size:15px;font-weight:400;color:#252525;transform:scaleX(0.9875);">IMG-20181004-WA0003.jpg</span><span class="t" style="left:283.3px;top:357.0px;font-size:11px;font-weight:400;color:#9a9a9a;transform:scaleX(0.9617);">4 oct. 12:08</span><span class="t" style="left:390.2px;top:357.0px;font-size:11px;font-weight:400;color:#9a9a9a;transform:scaleX(0.9343);">JPG</span><span class="t" style="left:496.7px;top:357.0px;font-size:11px;font-weight:400;color:#9a9a9a;transform:scaleX(0.9367);">83,61 KB</span><div class="abs" style="left:65px;top:383.14px;width:547px;height:1px;background:#e6e6e6"></div><div class="abs" style="left:14px;top:382.97px;width:42px;height:42.03px;overflow:hidden;background:#d8c4b6"><svg style="left:0;top:0" width="42" height="42" viewBox="0 0 42 42" preserveAspectRatio="none"><rect width="42" height="42" fill="#d3c3b3"/><rect x="28" width="14" height="42" fill="#d8cabc"/><path d="M36 0h6v10z" fill="#0c0c0c"/><path d="M19.500 0h5l0.500 10-7 6 6 2.500-2 10.500h-4.500l1-9-4-2.500 5-7.500z" fill="#2a6aa8"/><path d="M19.500 0h2l-0.500 9-5 8.500 4 2.500-1 9h-1.500l1-9-4-2.500 5-7.500z" fill="#17305c"/><path d="M23 1l0.800 9-5.500 5.500" stroke="#8ab8e0" stroke-width="0.800" fill="none"/><path d="M13.500 28.500h12.500l0.500 6h-13.500z" fill="#c9c9d1"/><rect x="15" y="30" width="9" height="2" fill="#e4e4ea"/><rect y="40.500" width="2" height="1.500" fill="#222"/></svg></div><span class="t" style="left:69.6px;top:396.0px;font-size:15px;font-weight:400;color:#252525;transform:scaleX(0.9875);">IMG-20181004-WA0002.jpg</span><span class="t" style="left:283.3px;top:399.0px;font-size:11px;font-weight:400;color:#9a9a9a;transform:scaleX(0.9617);">4 oct. 12:08</span><span class="t" style="left:390.2px;top:399.0px;font-size:11px;font-weight:400;color:#9a9a9a;transform:scaleX(0.9343);">JPG</span><span class="t" style="left:496.7px;top:399.0px;font-size:11px;font-weight:400;color:#9a9a9a;transform:scaleX(0.9367);">57,49 KB</span><div class="abs" style="left:65px;top:424.87px;width:547px;height:1px;background:#e6e6e6"></div><div class="abs" style="left:14px;top:424.70px;width:42px;height:42.03px;overflow:hidden;background:#d8c4b6"><svg style="left:0;top:0" width="42" height="42" viewBox="0 0 42 42" preserveAspectRatio="none"><rect width="42" height="42" fill="#d9cabb"/><rect x="0" y="0" width="42" height="1.200" fill="#b8a898"/><ellipse cx="19" cy="21.5" rx="14.8" ry="12.8" fill="#e4ecf0" opacity="0.8"/><ellipse cx="19" cy="21.5" rx="14" ry="12" fill="#2b92c2"/><rect x="4.5" y="24" width="19.5" height="2.300" fill="#eef2f4"/><ellipse cx="20.5" cy="18.5" rx="3.300" ry="1.300" fill="#e8f0f4"/><path d="M4 26.3h7.0v3.500h-6.3z" fill="#d8c8b8"/><rect x="11" y="30.0" width="15" height="1.300" fill="#1a4a78" opacity="0.800"/><rect x="8" y="36" width="17" height="1.500" fill="#b8aca0"/><rect x="8" y="39" width="14" height="1" fill="#c4b8ac"/></svg></div><span class="t" style="left:69.6px;top:438.0px;font-size:15px;font-weight:400;color:#252525;transform:scaleX(0.9875);">IMG-20181004-WA0001.jpg</span><span class="t" style="left:283.3px;top:441.0px;font-size:11px;font-weight:400;color:#9a9a9a;transform:scaleX(0.9617);">4 oct. 12:08</span><span class="t" style="left:390.2px;top:441.0px;font-size:11px;font-weight:400;color:#9a9a9a;transform:scaleX(0.9343);">JPG</span><span class="t" style="left:496.7px;top:441.0px;font-size:11px;font-weight:400;color:#9a9a9a;transform:scaleX(0.9367);">72,69 KB</span><div class="abs" style="left:65px;top:466.60px;width:547px;height:1px;background:#e6e6e6"></div><div class="abs" style="left:14px;top:466.43px;width:42px;height:42.03px;overflow:hidden;background:#d8c4b6"><svg style="left:0;top:0" width="42" height="42" viewBox="0 0 42 42" preserveAspectRatio="none"><rect width="42" height="42" fill="#ddd1c5"/><rect y="38" width="42" height="4" fill="#d8b4a8"/><rect x="36" y="38.500" width="6" height="3.500" fill="#c87868"/><ellipse cx="20" cy="18.5" rx="15.8" ry="13.600000000000001" fill="#e4ecf0" opacity="0.8"/><ellipse cx="20" cy="18.5" rx="15" ry="12.8" fill="#2c9acb"/><rect x="17" y="20.7" width="18" height="2.300" fill="#eef2f4"/><ellipse cx="21" cy="12.5" rx="3.300" ry="1.300" fill="#e8f0f4"/><path d="M36 23.0h-7.5v3.200h6.0z" fill="#d8c8b8"/><rect x="12" y="27.8" width="15" height="1.300" fill="#1a4a78" opacity="0.800"/><rect x="7.500" y="31" width="15" height="4" fill="#30283a"/><rect x="23" y="31" width="9" height="3" fill="#b8b0b8"/><rect x="35" y="31" width="0.800" height="4" fill="#444"/></svg></div><span class="t" style="left:69.6px;top:480.0px;font-size:15px;font-weight:400;color:#252525;transform:scaleX(0.9875);">IMG-20181004-WA0000.jpg</span><span class="t" style="left:283.3px;top:483.0px;font-size:11px;font-weight:400;color:#9a9a9a;transform:scaleX(0.9617);">4 oct. 12:01</span><span class="t" style="left:390.2px;top:483.0px;font-size:11px;font-weight:400;color:#9a9a9a;transform:scaleX(0.9343);">JPG</span><span class="t" style="left:496.7px;top:483.0px;font-size:11px;font-weight:400;color:#9a9a9a;transform:scaleX(0.9367);">84,04 KB</span><div class="abs" style="left:65px;top:508.33px;width:547px;height:1px;background:#e6e6e6"></div><div class="abs" style="left:14px;top:508.16px;width:42px;height:42.03px;overflow:hidden;background:#d8c4b6"><svg style="left:0;top:0" width="42" height="42" viewBox="0 0 42 42" preserveAspectRatio="none"><rect width="42" height="42" fill="#d9aaa2"/><path d="M14 0h28v22c-8 0-14-4-20-10z" fill="#b4aaa2"/><path d="M0 0h14l8 12-22 6z" fill="#c8a8a0"/><path d="M0 8c8-4 16 2 24 12l18 6v6L20 24 0 18z" fill="#e2b6b0"/><path d="M0 24c6-2 14 0 20 6l22 4v8H0z" fill="#e4b4aa"/><path d="M0 19l22 7" stroke="#a89890" stroke-width="2" opacity="0.700"/><path d="M36 0h6v14c-3-3-5-8-6-14z" fill="#a85a48"/><ellipse cx="16" cy="36" rx="4" ry="2.800" fill="#d98a48"/><circle cx="29" cy="38" r="1.600" fill="#e0a060"/><ellipse cx="4" cy="9" rx="3" ry="2" fill="#c88888"/></svg></div><span class="t" style="left:69.6px;top:522.0px;font-size:15px;font-weight:400;color:#252525;transform:scaleX(0.9875);">IMG-20181003-WA0002.jpg</span><span class="t" style="left:283.3px;top:524.0px;font-size:11px;font-weight:400;color:#9a9a9a;transform:scaleX(0.9617);">3 oct. 20:36</span><span class="t" style="left:390.2px;top:524.0px;font-size:11px;font-weight:400;color:#9a9a9a;transform:scaleX(0.9343);">JPG</span><span class="t" style="left:496.7px;top:524.0px;font-size:11px;font-weight:400;color:#9a9a9a;transform:scaleX(0.9367);">99,44 KB</span><div class="abs" style="left:65px;top:550.06px;width:547px;height:1px;background:#e6e6e6"></div><div class="abs" style="left:14px;top:549.89px;width:42px;height:42.03px;overflow:hidden;background:#d8c4b6"><svg style="left:0;top:0" width="42" height="42" viewBox="0 0 42 42" preserveAspectRatio="none"><rect width="42" height="42" fill="#b9c5a5"/><rect width="42" height="5.600" fill="#fdfdfd"/><rect x="1" y="2" width="37" height="1.700" fill="#1a1a1a"/><rect x="0.5" y="6" width="20.5" height="17" fill="#9fbfb2"/><rect x="1.5" y="7.5" width="7.8" height="10.5" fill="#2a5a62"/><rect x="10.3" y="8" width="9.2" height="1.100" fill="#4a5a78" opacity="0.700"/><rect x="10.3" y="10.5" width="8.2" height="0.900" fill="#6a7a6a" opacity="0.700"/><rect x="1.5" y="20" width="14.3" height="1.200" fill="#5a6a5a" opacity="0.600"/><rect x="0.5" y="24" width="20.5" height="17" fill="#c4cc9c"/><rect x="1.5" y="25.5" width="7.8" height="10.5" fill="#3a3028"/><rect x="10.3" y="26" width="9.2" height="1.100" fill="#4a5a78" opacity="0.700"/><rect x="10.3" y="28.5" width="8.2" height="0.900" fill="#6a7a6a" opacity="0.700"/><rect x="1.5" y="38" width="14.3" height="1.200" fill="#5a6a5a" opacity="0.600"/><rect x="22" y="6" width="19.5" height="11.5" fill="#86b4c4"/><rect x="23" y="7.5" width="7.4" height="7.1" fill="#2a3a4a"/><rect x="31.4" y="8" width="8.8" height="1.100" fill="#4a5a78" opacity="0.700"/><rect x="31.4" y="10.5" width="7.8" height="0.900" fill="#6a7a6a" opacity="0.700"/><rect x="23" y="14.5" width="13.6" height="1.200" fill="#5a6a5a" opacity="0.600"/><rect x="22" y="18.5" width="19.5" height="11" fill="#c9d3a7"/><rect x="23" y="20.0" width="7.4" height="6.8" fill="#5a6a50"/><rect x="31.4" y="20.5" width="8.8" height="1.100" fill="#4a5a78" opacity="0.700"/><rect x="31.4" y="23.0" width="7.8" height="0.900" fill="#6a7a6a" opacity="0.700"/><rect x="23" y="26.5" width="13.6" height="1.200" fill="#5a6a5a" opacity="0.600"/><rect x="22" y="30.5" width="19.5" height="10.5" fill="#cbd18f"/><rect x="23" y="32.0" width="7.4" height="6.5" fill="#3a5a30"/><rect x="31.4" y="32.5" width="8.8" height="1.100" fill="#4a5a78" opacity="0.700"/><rect x="31.4" y="35.0" width="7.8" height="0.900" fill="#6a7a6a" opacity="0.700"/><rect x="23" y="38.0" width="13.6" height="1.200" fill="#5a6a5a" opacity="0.600"/><rect x="21" y="5.600" width="1" height="36.400" fill="#e8ece0"/><rect y="41" width="42" height="1" fill="#6a7078"/></svg></div><span class="t" style="left:69.6px;top:563.0px;font-size:15px;font-weight:400;color:#252525;transform:scaleX(0.9875);">IMG-20181003-WA0001.jpg</span><span class="t" style="left:283.3px;top:566.0px;font-size:11px;font-weight:400;color:#9a9a9a;transform:scaleX(0.9617);">3 oct. 10:56</span><span class="t" style="left:390.2px;top:566.0px;font-size:11px;font-weight:400;color:#9a9a9a;transform:scaleX(0.9343);">JPG</span><span class="t" style="left:496.7px;top:566.0px;font-size:11px;font-weight:400;color:#9a9a9a;transform:scaleX(0.9586);">129 KB</span><div class="abs" style="left:65px;top:591.79px;width:547px;height:1px;background:#e6e6e6"></div><div class="abs" style="left:14px;top:591.62px;width:42px;height:42.03px;overflow:hidden;background:#d8c4b6"><svg style="left:0;top:0" width="42" height="42" viewBox="0 0 42 42" preserveAspectRatio="none"><rect width="42" height="42" fill="#a8917a"/><rect width="42" height="6" fill="#8a8a84"/><rect x="0" y="0" width="4" height="18" fill="#5a7a9a"/><rect x="12" y="0" width="6" height="13" fill="#2a2420"/><rect x="24" y="2" width="18" height="9" fill="#9a8c80"/><path d="M6 20c0-8 3-12 6-12s4.500 4 4.500 9l-2 3z" fill="#e4e6ec"/><circle cx="11.500" cy="6.500" r="2.300" fill="#d8b8a0"/><path d="M0 12h6v8H0z" fill="#1c2030"/><path d="M0 20c10-4 24-3 34 2l-4 12H0z" fill="#c6a772"/><ellipse cx="7" cy="20" rx="4.500" ry="2" fill="#b87838"/><ellipse cx="25" cy="19.500" rx="4" ry="2" fill="#d8b068"/><ellipse cx="29" cy="24" rx="4" ry="2.200" fill="#c87848"/><ellipse cx="6" cy="27" rx="5" ry="2" fill="#a88858"/><path d="M33 36c-1-10 0-19 4-21 3 0 5 2 5 6v15z" fill="#eceef2"/><circle cx="34" cy="13" r="2.800" fill="#d8a890"/><path d="M37 9c3 0 5 3 5 8l-3-2z" fill="#5a4030"/><path d="M10 36l8-6h10l-6 8H10z" fill="#8696b8"/><path d="M18 31l6-2 2 6-6 3z" fill="#a8c8a0"/><path d="M24 38l6-7 8 6v3H24z" fill="#1c2230"/><rect y="39" width="42" height="3" fill="#b0b0b0"/><rect y="33" width="8" height="6" fill="#6a5a48"/></svg></div><span class="t" style="left:69.6px;top:605.0px;font-size:15px;font-weight:400;color:#252525;transform:scaleX(0.9875);">IMG-20181001-WA0008.jpg</span><span class="t" style="left:283.3px;top:608.0px;font-size:11px;font-weight:400;color:#9a9a9a;transform:scaleX(0.9617);">1 oct. 18:26</span><span class="t" style="left:390.2px;top:608.0px;font-size:11px;font-weight:400;color:#9a9a9a;transform:scaleX(0.9343);">JPG</span><span class="t" style="left:496.7px;top:608.0px;font-size:11px;font-weight:400;color:#9a9a9a;transform:scaleX(0.9807);">211 KB</span><div class="abs" style="left:65px;top:633.52px;width:547px;height:1px;background:#e6e6e6"></div><div class="abs" style="left:14px;top:633.35px;width:42px;height:42.03px;overflow:hidden;background:#d8c4b6"><svg style="left:0;top:0" width="42" height="42" viewBox="0 0 42 42" preserveAspectRatio="none"><rect width="42" height="42" fill="#a9a199"/><rect width="16" height="42" fill="#4a4038"/><rect x="5" y="0" width="12" height="9" fill="#3a5a30"/><rect x="10" y="1" width="4" height="4" fill="#c8b040"/><rect x="0" y="10" width="6" height="14" fill="#2a2420"/><circle cx="21.500" cy="7" r="4.400" fill="#dcae9c"/><path d="M17 5c1-4 8-4 9 0-3-1.500-6-1.500-9 0z" fill="#e8e0d8"/><circle cx="20" cy="9" r="1.300" fill="#d07068"/><path d="M28 9c0-8 11-8 11 0v10l-3-4h-6l-2 4z" fill="#4e2c1c"/><ellipse cx="33.500" cy="8.500" rx="4" ry="4.800" fill="#cf987e"/><path d="M16 24c0-8 3-11 7-11s6 4 6 11z" fill="#1e2028"/><path d="M28 24c0-7 2-11 6-11s8 3 8 11z" fill="#9a9088"/><ellipse cx="14" cy="13" rx="4" ry="2.500" fill="#1c1c20"/><circle cx="14.500" cy="17.500" r="3.500" fill="#d0a088"/><path d="M3 24c1-5 5-7 9-6l6 6z" fill="#e2e4ea"/></svg></div><span class="t" style="left:69.6px;top:647.0px;font-size:15px;font-weight:400;color:#252525;transform:scaleX(0.9875);">IMG-20181001-WA0007.jpg</span><span class="t" style="left:283.3px;top:650.0px;font-size:11px;font-weight:400;color:#9a9a9a;transform:scaleX(0.9617);">1 oct. 17:53</span><span class="t" style="left:390.2px;top:650.0px;font-size:11px;font-weight:400;color:#9a9a9a;transform:scaleX(0.9343);">JPG</span><span class="t" style="left:496.7px;top:650.0px;font-size:11px;font-weight:400;color:#9a9a9a;transform:scaleX(0.9586);">123 KB</span><div class="abs" style="left:65px;top:675.25px;width:547px;height:1px;background:#e6e6e6"></div></div><div class="abs" style="left:1630.5px;top:139.500px;width:5.500px;height:25px;border-radius:3px;background:#a9a9a9"></div><div class="abs" style="left:622.5px;top:800px;width:31px;height:31px;overflow:hidden;background:#d9c3b3"><svg style="left:0;top:0" width="31" height="31" viewBox="0 0 42 42" preserveAspectRatio="none"><rect width="42" height="42" fill="#d9c5b9"/><rect width="5" height="42" fill="#9aa0ac"/><rect x="1" y="6" width="4" height="12" fill="#c9b08e"/><rect x="27" y="1" width="15" height="31" fill="#e9e2de"/><ellipse cx="19.800" cy="5.600" rx="6" ry="5" fill="#a8492a"/><ellipse cx="20.300" cy="9.800" rx="3.500" ry="4.400" fill="#d9a48c"/><path d="M8.500 38c0-9 1.500-19 4.500-21h13.500c3.500 2 4 12 4 21z" fill="#dcae98"/><path d="M13 17.500c3 2.500 10 2.500 13.500 0l2 20.500H12z" fill="#cad6d2"/><path d="M15 16.500c2.500 3.500 7.500 3.500 10 0" fill="none" stroke="#6a6a72" stroke-width="0.900"/><ellipse cx="20.500" cy="36.500" rx="5" ry="3.600" fill="#e6d68c"/><circle cx="18.500" cy="36" r="1.300" fill="#f4ecd0"/><circle cx="22.500" cy="37" r="1.300" fill="#f4ecd0"/><rect x="10" y="40" width="20" height="2" fill="#7a6a62"/><g fill="#141414"><rect x="30" y="4" width="11" height="1.700" transform="rotate(-10 35 5)"/><rect x="29" y="7.700" width="12" height="1.500"/><rect x="28.500" y="10.700" width="12" height="1.300"/><rect x="30" y="13.700" width="10" height="1.300"/><rect x="33" y="19.500" width="8" height="1.700" transform="rotate(-10 37 20)"/><rect x="31" y="22.800" width="10" height="1.300"/><rect x="31" y="25.500" width="10" height="1.300"/><rect x="33" y="28.300" width="8" height="1.200"/></g></svg></div><span class="t" style="left:669.8px;top:810.0px;font-size:10.5px;font-weight:700;color:#7a7a7a;transform:scaleX(0.8373);">1 archivo copiado.</span><span class="t" style="left:1469.1px;top:809.0px;font-size:12.2px;font-weight:700;color:#e9a233;transform:scaleX(0.8422);">CANCELAR</span><span class="t" style="left:1545.8px;top:809.0px;font-size:12.2px;font-weight:700;color:#f1d9a9;transform:scaleX(0.8508);">PEGAR AQUÍ</span><div class="abs" style="left:18.500px;top:1076.300px;width:105px;height:31px;border-radius:5px;background:rgba(8,4,16,.82)"></div><svg style="left:30px;top:1085.400px" width="14" height="14" viewBox="0 0 14 14"><circle cx="1.55" cy="1.40" r="1.250" fill="#fff"/><circle cx="7.05" cy="1.40" r="1.250" fill="#fff"/><circle cx="12.55" cy="1.40" r="1.250" fill="#fff"/><circle cx="1.55" cy="6.80" r="1.250" fill="#fff"/><circle cx="7.05" cy="6.80" r="1.250" fill="#fff"/><circle cx="12.55" cy="6.80" r="1.250" fill="#fff"/><circle cx="1.55" cy="12.20" r="1.250" fill="#fff"/><circle cx="7.05" cy="12.20" r="1.250" fill="#fff"/><circle cx="12.55" cy="12.20" r="1.250" fill="#fff"/></svg><svg style="left:64px;top:1085px" width="14" height="14" viewBox="0 0 14 14"><path d="M0.900 5.400H10.400c1.900 0 2.800-0.900 2.800-2.800V0.700M13.200 8.900H3.700c-1.900 0-2.800 0.900-2.800 2.800v1.700" fill="none" stroke="#fff" stroke-width="1.400" stroke-linecap="round" stroke-linejoin="round"/></svg><svg style="left:98px;top:1085px" width="14" height="14" viewBox="0 0 14 14"><path d="M13.300 0.800H3.300c-1.700 0-2.600 0.900-2.600 2.600v10M4 13.300h6.700c1.700 0 2.600-0.900 2.600-2.600V4.200" fill="none" stroke="#fff" stroke-width="1.500" stroke-linecap="butt" stroke-linejoin="round"/></svg><div class="abs" style="left:145.8px;top:1074.800px;width:8.400px;height:3px;border-radius:1.500px;background:#f6f4fa"></div><svg style="left:136.65px;top:1079.700px" width="26.700" height="26.700" viewBox="0 0 26.700 26.700"><defs><linearGradient id="cam" x1="0.700" y1="0" x2="0.300" y2="1"><stop offset="0" stop-color="#9b6fd6"/><stop offset="0.600" stop-color="#6e84e2"/><stop offset="1" stop-color="#5b9cf0"/></linearGradient></defs><path d="M13.35 0C23 0 26.7 3.700 26.700 13.350S23 26.700 13.350 26.700 0 23 0 13.350 3.700 0 13.350 0Z" fill="url(#cam)"/><path d="M5.600 18V10.200c0-0.700 0.400-1.200 1.200-1.200h3l1.300-1.700h4.400l1.300 1.700h3.100M21.300 12v5.600c0 0.800-0.500 1.200-1.200 1.200H7.500" fill="none" stroke="#dfe6ff" stroke-width="1.100" stroke-linecap="round" stroke-linejoin="round"/><circle cx="13.350" cy="13.800" r="2.900" fill="none" stroke="#dfe6ff" stroke-width="1.100"/></svg><div class="abs" style="left:186.0px;top:1074.800px;width:8.400px;height:3px;border-radius:1.500px;background:#f6f4fa"></div><svg style="left:176.87px;top:1079.700px" width="26.700" height="26.700" viewBox="0 0 26.700 26.700"><path d="M13.35 0C23 0 26.7 3.700 26.700 13.350S23 26.700 13.350 26.700 0 23 0 13.350 3.700 0 13.350 0Z" fill="#ffffff"/><rect x="5.200" y="6.200" width="16.300" height="15" rx="1" fill="#4285f4"/><rect x="5.200" y="6.200" width="16.300" height="3.400" fill="#3367d6"/><path d="M5.200 17.500h16.300v2.700a1 1 0 0 1-1 1H6.200a1 1 0 0 1-1-1z" fill="#2f6ee6"/><text x="13.350" y="17.600" font-family="Liberation Sans" font-size="8.500" font-weight="700" fill="#e8f0ff" text-anchor="middle">31</text></svg><div class="abs" style="left:226.2px;top:1074.800px;width:8.400px;height:3px;border-radius:1.500px;background:#f6f4fa"></div><svg style="left:217.09px;top:1079.700px" width="26.700" height="26.700" viewBox="0 0 26.700 26.700"><defs><radialGradient id="ig" cx="0.250" cy="1.050" r="1.250"><stop offset="0" stop-color="#fdd067"/><stop offset="0.250" stop-color="#f77a2f"/><stop offset="0.500" stop-color="#e1306c"/><stop offset="0.750" stop-color="#a233b8"/><stop offset="1" stop-color="#4f5bd5"/></radialGradient></defs><path d="M13.35 0C23 0 26.7 3.700 26.700 13.350S23 26.700 13.350 26.700 0 23 0 13.350 3.700 0 13.350 0Z" fill="url(#ig)"/><rect x="6.300" y="6.300" width="14.100" height="14.100" rx="4" fill="none" stroke="#fff" stroke-width="1.400"/><circle cx="13.350" cy="13.350" r="3.500" fill="none" stroke="#fff" stroke-width="1.400"/><circle cx="17.600" cy="9.100" r="0.900" fill="#fff"/></svg><div class="abs" style="left:266.5px;top:1074.800px;width:8.400px;height:3px;border-radius:1.500px;background:#f6f4fa"></div><svg style="left:257.31px;top:1079.700px" width="26.700" height="26.700" viewBox="0 0 26.700 26.700"><path d="M13.35 0C23 0 26.7 3.700 26.700 13.350S23 26.700 13.350 26.700 0 23 0 13.350 3.700 0 13.350 0Z" fill="#ffffff"/><path d="M5.200 7.800h16.300v11.800H5.200z" fill="#f1eeee"/><path d="M5.200 19.600V8l8.150 6.200L21.500 8v11.600h-2.600V12.500l-5.550 4.200-5.550-4.200v7.100z" fill="#d9493f"/><path d="M5.200 8l8.150 6.200L21.500 8" fill="none" stroke="#c7372d" stroke-width="0.600"/></svg><div class="abs" style="left:306.7px;top:1074.800px;width:8.400px;height:3px;border-radius:1.500px;background:#f6f4fa"></div><svg style="left:297.53px;top:1079.700px" width="26.700" height="26.700" viewBox="0 0 26.700 26.700"><path d="M13.35 0C23 0 26.7 3.700 26.700 13.350S23 26.700 13.350 26.700 0 23 0 13.350 3.700 0 13.350 0Z" fill="#ffffff"/><circle cx="13.350" cy="13.350" r="8.600" fill="#4caf50"/><path d="M13.350 13.350L5.900 9.050A8.600 8.600 0 0 1 20.800 9.050z" fill="#e94235"/><path d="M13.350 4.750A8.600 8.600 0 0 1 20.800 9.050L13.350 9.050z" fill="#e94235"/><path d="M20.800 9.050A8.600 8.600 0 0 1 13.350 21.950L17.100 15.500 13.350 9.050z" fill="#fbc02d"/><path d="M13.350 9.050H20.800" stroke="#e94235" stroke-width="0.100"/><circle cx="13.350" cy="13.350" r="4.100" fill="#fff"/><circle cx="13.350" cy="13.350" r="3.200" fill="#4a8af4"/></svg><div class="abs" style="left:346.9px;top:1074.800px;width:8.400px;height:3px;border-radius:1.500px;background:#f6f4fa"></div><svg style="left:337.75px;top:1079.700px" width="26.700" height="26.700" viewBox="0 0 26.700 26.700"><path d="M13.35 0C23 0 26.7 3.700 26.700 13.350S23 26.700 13.350 26.700 0 23 0 13.350 3.700 0 13.350 0Z" fill="#3fd163"/><path d="M13.500 5.300a8 8 0 0 0-6.900 12l-1.200 4.200 4.400-1.100A8 8 0 1 0 13.500 5.300z" fill="none" stroke="#e9ffe9" stroke-width="1.300" stroke-linejoin="round"/><path d="M10.300 9.800c0.400-0.400 1-0.300 1.200 0.100l0.700 1.500c0.100 0.300 0 0.700-0.300 0.900-0.300 0.300-0.300 0.600-0.100 0.900 0.600 0.900 1.300 1.600 2.300 2.100 0.300 0.100 0.600 0.100 0.800-0.200 0.300-0.400 0.600-0.500 1-0.300l1.400 0.700c0.400 0.200 0.500 0.700 0.200 1.100-0.700 0.900-1.700 1.200-2.800 0.900-2.400-0.700-4.200-2.500-5-4.900-0.300-1 0-2.100 0.600-2.800z" fill="#e9ffe9"/></svg><div class="abs" style="left:387.1px;top:1074.800px;width:8.400px;height:3px;border-radius:1.500px;background:#f6f4fa"></div><svg style="left:377.97px;top:1079.700px" width="26.700" height="26.700" viewBox="0 0 26.700 26.700"><path d="M13.35 0C23 0 26.7 3.700 26.700 13.350S23 26.700 13.350 26.700 0 23 0 13.350 3.700 0 13.350 0Z" fill="#fb9a1d"/><path d="M13.350 5.800c2.400 0 3.900 1.900 3.900 4.400 0 2.300-1.200 4.400-2.600 5.300 1 1.400 3 2.300 5.300 3M13.350 5.800c-2.400 0-3.900 1.900-3.900 4.400 0 2.300 1.200 4.400 2.600 5.300-1 1.400-3 2.300-5.300 3" fill="none" stroke="#ffe9c8" stroke-width="1.100" stroke-linecap="round" stroke-linejoin="round"/></svg><div class="abs" style="left:427.3px;top:1074.800px;width:8.400px;height:3px;border-radius:1.500px;background:#f6f4fa"></div><svg style="left:418.19px;top:1079.700px" width="26.700" height="26.700" viewBox="0 0 26.700 26.700"><path d="M13.35 0C23 0 26.7 3.700 26.700 13.350S23 26.700 13.350 26.700 0 23 0 13.350 3.700 0 13.350 0Z" fill="#1fc878"/><path d="M9.300 6.300c-1.400 0.600-2.100 1.700-1.600 3.400 1.300 4.600 4.700 8.200 9.200 9.800 1.700 0.600 3-0.100 3.600-1.500 0.200-0.500 0-1-0.500-1.300l-2.400-1.400c-0.500-0.300-1-0.200-1.400 0.200l-0.800 0.900c-2-1-3.500-2.600-4.500-4.700l1-0.800c0.400-0.400 0.500-0.900 0.300-1.400l-1.300-2.600c-0.300-0.600-0.900-0.900-1.600-0.600z" fill="none" stroke="#dcffe9" stroke-width="1.100" stroke-linejoin="round"/></svg><div class="abs" style="left:467.6px;top:1074.800px;width:8.400px;height:3px;border-radius:1.500px;background:#f6f4fa"></div><svg style="left:458.41px;top:1079.700px" width="26.700" height="26.700" viewBox="0 0 26.700 26.700"><defs><radialGradient id="gm" cx="0.600" cy="0.300" r="0.900"><stop offset="0" stop-color="#9cd83a"/><stop offset="0.600" stop-color="#4e9a22"/><stop offset="1" stop-color="#2f6a1a"/></radialGradient></defs><path d="M13.35 0C23 0 26.7 3.700 26.700 13.350S23 26.700 13.350 26.700 0 23 0 13.350 3.700 0 13.350 0Z" fill="url(#gm)"/><clipPath id="gmc"><path d="M13.35 0C23 0 26.7 3.700 26.700 13.350S23 26.700 13.350 26.700 0 23 0 13.350 3.700 0 13.350 0Z"/></clipPath><g clip-path="url(#gmc)"><ellipse cx="8.300" cy="11.500" rx="4.200" ry="4.800" fill="#e9b78a"/><path d="M4 9.500c0.500-3.500 8-3.500 8.600 0-2-1.600-6.500-1.600-8.600 0z" fill="#d8d0c0"/><path d="M2 27c0-6 3-10 6.500-10s6 4 6 10z" fill="#e8e8f0"/><path d="M5.800 14.200c1.600 1.300 3.600 1.300 5 0" fill="none" stroke="#8a4a2a" stroke-width="0.800"/><path d="M17 7l3.500 9M21 6l-2.500 10M17.500 16.500l4.500 7" stroke="#d8dde0" stroke-width="1.300" stroke-linecap="round"/><path d="M13 20l6-3 2 4-6 3z" fill="#a86a3a"/></g></svg><div class="abs" style="left:507.8px;top:1074.800px;width:8.400px;height:3px;border-radius:1.500px;background:#f6f4fa"></div><svg style="left:498.63px;top:1079.700px" width="26.700" height="26.700" viewBox="0 0 26.700 26.700"><path d="M13.35 0C23 0 26.7 3.700 26.700 13.350S23 26.700 13.350 26.700 0 23 0 13.350 3.700 0 13.350 0Z" fill="#f5a730"/><path d="M5.800 19.600V6.600h6.500l1.400 1.700h6.200M8.900 10.600h11.500v7.800a1.200 1.200 0 0 1-1.200 1.200H8.500" fill="none" stroke="#ffd98a" stroke-width="1.100" stroke-linecap="round" stroke-linejoin="round"/></svg><div class="abs" style="left:1315.500px;top:1076.200px;width:646px;height:31.400px;border-radius:5px;background:rgba(14,8,40,.72)"></div><svg style="left:1332px;top:1086px" width="9" height="13" viewBox="0 0 9 13"><path d="M1 0.800l6.600 5.700L1 12.200" fill="none" stroke="#f3f0fa" stroke-width="1.200" stroke-linecap="round" stroke-linejoin="round"/></svg><svg style="left:1361px;top:1087.3px" width="10.5" height="9.5" viewBox="0 0 10.5 9.5"><rect width="10.500" height="9.500" rx="0.800" fill="#f3f0fa"/><path d="M1.200 7.800l2.600-3 1.800 1.900 1.500-1.300 2.300 2.400z" fill="#1c1244"/><circle cx="3" cy="2.800" r="0.900" fill="#1c1244"/></svg><svg style="left:1388px;top:1087px" width="11.3" height="10.6" viewBox="0 0 11.3 10.6"><rect width="11.300" height="10.600" rx="1" fill="#f3f0fa"/><path d="M2.300 4.400h1.500v4.700H2.300zM2.200 2.300h1.700v1.400H2.200zM5 4.400h1.400v0.700c0.800-1.200 3.300-1.100 3.300 1.100v2.900H8.200V6.500c0-1.200-1.700-1.200-1.700 0v2.600H5z" fill="#1c1244"/></svg><svg style="left:1416px;top:1087px" width="11.5" height="10.6" viewBox="0 0 11.5 10.6"><path d="M0 4.500L5.750 0l5.750 4.500v6.100H0z" fill="#f3f0fa"/><rect x="2.800" y="4.300" width="5.900" height="4.300" fill="#1c1244"/><path d="M3.400 5l2.350 1.900L8.100 5v3H3.400z" fill="#f3f0fa"/></svg><div class="abs" style="left:1440px;top:1085.300px;width:1px;height:13.700px;background:#5c4f8c"></div><svg style="left:1453px;top:1086px" width="13.3" height="12.3" viewBox="0 0 13.3 12.3"><path d="M6.650 0.700L9.700 5.800M3.700 5.600L1 10.300c-0.300 0.700 0 1.300 0.800 1.300h3.400M8.200 11.600h3.400c0.800 0 1.100-0.600 0.800-1.300L9.700 5.800M6.650 0.700L3.700 5.600M5.200 9.600v2M8.200 9.600v2M6.700 7v3" fill="none" stroke="#f3f0fa" stroke-width="1.200" stroke-linecap="round" stroke-linejoin="round"/></svg><svg style="left:1483px;top:1085.3px" width="8" height="13.7" viewBox="0 0 8 13.7"><path d="M0.800 3.800l6 6-3 3V0.900l3 3-6 6" fill="none" stroke="#f3f0fa" stroke-width="1.200" stroke-linejoin="round" stroke-linecap="round"/></svg><svg style="left:1508.8px;top:1085.6px" width="12.8" height="13" viewBox="0 0 12.8 13"><circle cx="6.400" cy="7.100" r="5.200" fill="#f3f0fa"/><path d="M0.600 3L3 0.800M12.200 3L9.800 0.800M2.500 12.500l1-1.200M10.300 12.500l-1-1.200" stroke="#f3f0fa" stroke-width="1.400" stroke-linecap="round"/><path d="M6.400 4.200v3.100h2.300" fill="none" stroke="#1c1244" stroke-width="1"/></svg><svg style="left:1534.5px;top:1085.6px" width="17.2" height="12.5" viewBox="0 0 17.2 12.5"><path d="M0.800 4.300a10 10 0 0 1 13.400 0M2.800 6.700a7 7 0 0 1 9.400 0M4.900 9a3.900 3.900 0 0 1 5.200 0" fill="none" stroke="#8b82ac" stroke-width="1.200" stroke-linecap="round"/><circle cx="7.500" cy="11.200" r="1.100" fill="#fff"/><path d="M11.500 12.300V9.500M10.500 10.500l1 1.800 1-1.800M14.800 9.500v2.800M13.800 11.300l1-1.800 1 1.800" stroke="#8b82ac" stroke-width="0.900" fill="none"/></svg><svg style="left:1564.6px;top:1086.5px" width="12.4" height="12" viewBox="0 0 12.4 12"><path d="M12.400 0v12H0z" fill="#6f668f"/></svg><span class="t" style="left:1589.5px;top:1087.0px;font-size:13.5px;font-weight:400;color:#d6d0e6;transform:scaleX(0.8287);">90%</span><svg style="left:1617.9px;top:1086px" width="9.9" height="12.5" viewBox="0 0 9.9 12.5"><path d="M3.400 0h3.100v1.400h2.300c0.600 0 1.100 0.500 1.100 1.100v8.900c0 0.600-0.500 1.100-1.100 1.100H1.100c-0.600 0-1.100-0.500-1.100-1.100V2.500c0-0.600 0.500-1.100 1.100-1.100h2.300z" fill="#cfc9e0"/><path d="M5.800 3.300L3 7.400h1.900l-0.800 3.300 2.900-4.300H5.100z" fill="#1c1244"/></svg><svg style="left:1642.6px;top:1089.9px" width="7.8" height="5.2" viewBox="0 0 7.8 5.2"><path d="M0 5.200L3.900 0l3.900 5.200z" fill="#f3f0fa"/></svg><div class="abs" style="left:1664.500px;top:1085.300px;width:1px;height:13.700px;background:#5c4f8c"></div><svg style="left:1678px;top:1086.5px" width="11.8" height="11.5" viewBox="0 0 11.8 11.5"><path d="M3.700 0h4.400v0.900H7.400v3.300l4.100 6c0.500 0.700 0.100 1.300-0.700 1.300H1c-0.800 0-1.200-0.600-0.700-1.300l4.100-6V0.900H3.700z" fill="#f3f0fa"/><path d="M4.700 4.800h2.400l1.100 1.700H3.600z" fill="#1c1244" opacity="0.750"/></svg><svg style="left:1703.6px;top:1086.5px" width="15.8" height="10.8" viewBox="0 0 15.8 10.8"><rect x="0.600" y="0.600" width="14.600" height="9.600" rx="1" fill="none" stroke="#f3f0fa" stroke-width="1.200"/><path d="M2.700 3.200h10.500M2.700 5.200h10.500" stroke="#f3f0fa" stroke-width="1" stroke-dasharray="1.100 0.800"/><path d="M4.200 7.600h7.500" stroke="#f3f0fa" stroke-width="1.100"/></svg><svg style="left:1732px;top:1086px" width="15.4" height="12.5" viewBox="0 0 15.4 12.5"><path d="M0 4h3l4.200-4v12.500L3 8.500H0z" fill="#f3f0fa"/><path d="M9 3.500a3.500 3.500 0 0 1 0 5.500M10.800 1.800a6 6 0 0 1 0 8.900M12.700 0.400a8.300 8.300 0 0 1 0 11.700" fill="none" stroke="#f3f0fa" stroke-width="1.100" stroke-linecap="round"/></svg><svg style="left:1760px;top:1085.6px" width="15" height="13" viewBox="0 0 15 13"><path d="M0.600 3.500V0.600h3M11.400 0.600h3v2.900M14.400 9.500v2.900h-3M3.600 12.400h-3V9.500" fill="none" stroke="#7d739f" stroke-width="1.200"/><rect x="3.200" y="3.300" width="8.600" height="6.400" fill="#7d739f"/><rect x="4.300" y="4.500" width="6.400" height="1.300" fill="#2a1c5a"/></svg><svg style="left:1788.6px;top:1086.5px" width="14" height="13" viewBox="0 0 14 13"><circle cx="5.800" cy="5.800" r="4.900" fill="none" stroke="#f3f0fa" stroke-width="1.300"/><path d="M9.500 9.500l3.700 3" stroke="#f3f0fa" stroke-width="1.400" stroke-linecap="round"/></svg><span class="t" style="left:1815.2px;top:1087.0px;font-size:13.5px;font-weight:400;color:#f3f0fa;transform:scaleX(0.8985);">Lun., 8 de octubre</span><span class="t" style="left:1920.0px;top:1087.0px;font-size:13.5px;font-weight:400;color:#f3f0fa;transform:scaleX(0.9084);">12:26</span>
</body></html>
